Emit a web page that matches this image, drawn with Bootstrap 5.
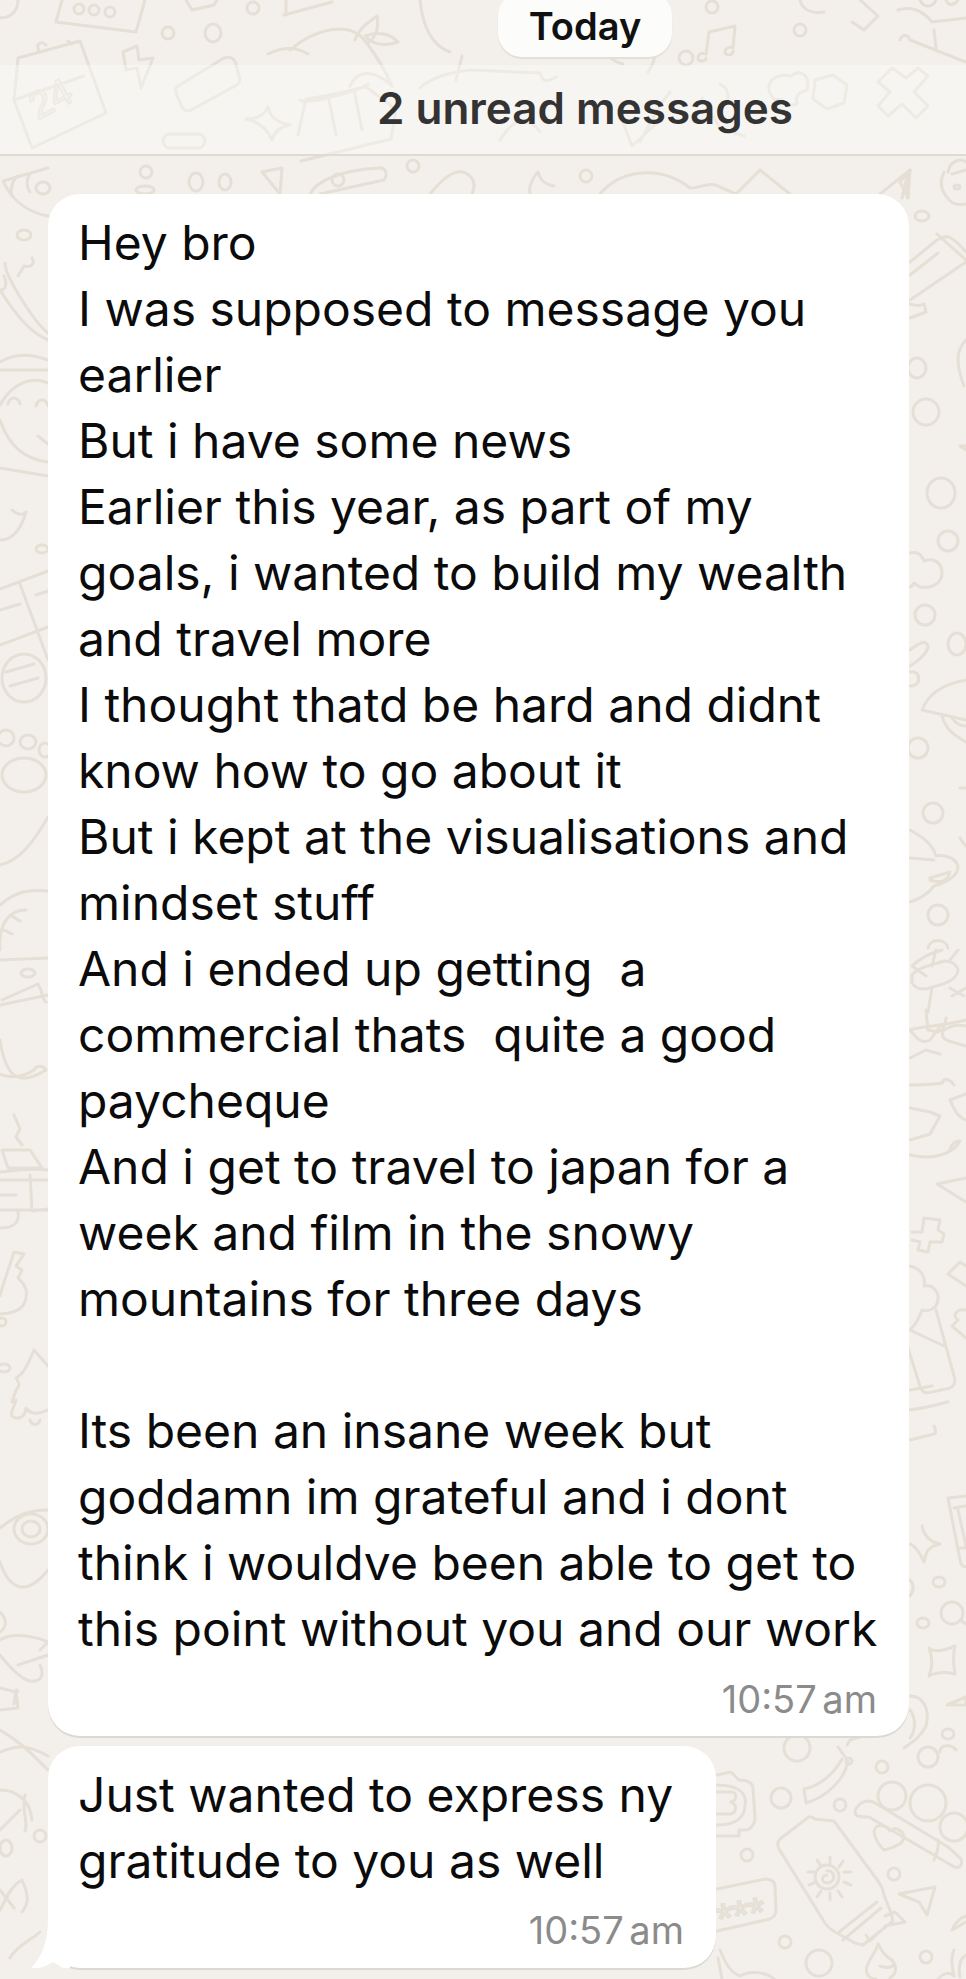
<!DOCTYPE html>
<html lang="en">
<head>
  <meta charset="UTF-8">
  <title>Chat</title>
  <meta name="viewport" content="width=device-width, initial-scale=1">
  <link href="https://cdn.jsdelivr.net/npm/bootstrap@5.3.0/dist/css/bootstrap.min.css" rel="stylesheet">
  <style>
    body { background-color: #f3f0eb; font-family: Inter, "Liberation Sans", sans-serif; overflow: hidden; }
    .chat-screen { height: 1979px; overflow: hidden; }
    .doodles { position: absolute; top: 0; left: 0; width: 966px; height: 1979px; fill: none; stroke: #e5dfd5; stroke-width: 3; stroke-linecap: round; stroke-linejoin: round; }
    .doodles text { font-family: "Liberation Sans", sans-serif; stroke-width: 2; }
    .day-pill {
      height: 65px; width: 174px; margin: -8px 0 0 498px; padding-top: 3px;
      background: #fcfcfb; border-radius: 24px;
      box-shadow: 0 2px 1px #e2dfd9;
      font-size: 38px; font-weight: 600; color: #111;
    }
    .unread-band {
      height: 91px; margin-top: 8px; padding: 0 0 4px 204px;
      background: rgba(255,255,255,.36);
      border-bottom: 2px solid #dedbd5;
      font-size: 44px; font-weight: 600; color: #333;
    }
    .bubble {
      background: #fff; border-radius: 32px; color: #0b0b0b;
      box-shadow: 0 2px 0 #dcd9d3;
      margin-left: 48px; padding: 16px 32px 0 30px;
      font-size: 48px; line-height: 66px; white-space: pre;
    }
    .bubble-long { width: 861px; height: 1542px; margin-top: 38px; }
    .bubble-short { width: 668px; height: 222px; margin-top: 10px; }
    .msg-time { font-size: 38px; line-height: 40px; color: #8b8b8b; word-spacing: -5px; margin-top: 17px; }
    .bubble-short .msg-time { margin-top: 16px; }
    .bubble-tail { position: absolute; left: -18px; bottom: -1px; width: 40px; height: 50px; fill: #fff; }
  </style>
</head>
<body>
  <div class="chat-screen position-relative">
    <!-- wallpaper -->
    <svg class="doodles" viewBox="0 0 966 1979">
      <!-- top -->
      <path d="M0 18c10 0 18-6 18-18"/>
      <path d="M62 0l-6 22 80 10 9-32"/>
      <circle cx="79" cy="9" r="5"/><circle cx="94" cy="10" r="5"/><circle cx="110" cy="12" r="5"/>
      <circle cx="168" cy="33" r="6"/><ellipse cx="213" cy="33" rx="8" ry="9"/><circle cx="253" cy="8" r="6"/>
      <path d="M186 0l6 10 22-5 3-5"/><path d="M284 15l48-13M286 0v15"/>
      <path d="M18 58l62-17 26 72-74 35-18-48z"/><path d="M40 52c-6-8 2-12 6-7M72 44l-4-3M14 100l70-24"/>
      <text x="30" y="112" font-size="38" transform="rotate(-28 50 100)">24</text>
      <path d="M123 52l14-6 2 14 14-2-12 30-4-20-11 2z"/>
      <path d="M178 86l46-28c6-2 10 0 12 6l3 12c2 4 0 8-4 10l-44 24c-6 2-8 0-10-5l-5-12c-1-4 0-6 2-7z"/>
      <rect x="163" y="134" width="42" height="14" rx="7"/>
      <path d="M246 119c12 0 18-4 22-12 2 10 8 15 22 18-12 2-16 8-18 15-4-10-12-18-26-21z"/>
      <path d="M268 54c16-8 30-6 40 0M290 50c26-22 60-30 76-8 12 16 20 30 26 44-4-4-30-26-42 0"/>
      <path d="M355 40c4-12 14-18 22-24 2 12 0 20-8 26M365 36c10-4 24-4 33 6-12 4-24 4-33-6"/>
      <path d="M298 135l8-36c18-2 40-8 60-12l30 22-5 30-90 22M300 100c6 6 60-10 68-16M328 95l8 40M354 90l8 40"/>
      <path d="M420 0c2 20 8 44 30 52M420 88c10-10 30-16 50-18l70 3c2 8 6 10 16 4M456 80l6-24"/>
      <path d="M500 140c16-26 30-22 40-8M605 50c4 6 8 12 18 14M640 0c12 26 24 50 8 72"/>
      <circle cx="686" cy="58" r="7"/>
      <path d="M706 54l3-22 26-6-2 22M706 54c-4-2-8 0-8 4s8 4 8 0M733 48c-3-2-8 0-8 4s8 4 8-1"/>
      <circle cx="712" cy="7" r="6"/><circle cx="800" cy="30" r="6"/>
      <path d="M775 100c-14-14-2-28 16-24 10-8 20 0 16 14-8 2-12 6-10 14l-10 2c-2-6-8-8-12-6z"/>
      <path d="M815 80l18-5 14 10-3 18-17 6-14-10z"/>
      <path d="M878 82l14-14 14 10 12-10 10 8-14 16 14 14-12 12-14-14-14 12-10-10 12-14z"/>
      <path d="M800 0c2 10 12 14 24 12M860 0l18 16-14 14-12-8M898 10c14-4 24 0 34 12l34-4M920 0c4 8 12 8 16 0M946 0c2 6 8 6 12 0"/>
      <path d="M900 40c2-6 8-6 10 0l56 22M934 30l2 18"/>
      <path d="M640 142c10-20 20-38 30-50M702 98l18 30 24 8M618 110l14 36 24-22M720 84c8 4 10 12 6 20"/>
      <!-- below the band -->
      <path d="M3 181c10 22 28 32 45 35M3 181l45-13"/><ellipse cx="43" cy="188" rx="7" ry="6"/>
      <path d="M18 176c-6 4-8 14-6 20M30 174c-4 6-4 12 0 18"/>
      <circle cx="146" cy="172" r="6"/><ellipse cx="196" cy="182" rx="7" ry="9"/><ellipse cx="225" cy="182" rx="6" ry="8"/><ellipse cx="145" cy="190" rx="9" ry="4"/>
      <path d="M262 172l18 22M262 172l20-4-2 26M310 194c6-12 28-24 70-26 6 0 8 6 4 12l-64 14"/><circle cx="338" cy="180" r="6"/>
      <circle cx="413" cy="166" r="6"/><path d="M430 194c16-20 30-28 40-18 6 6 4 12 2 18"/><circle cx="586" cy="176" r="6"/>
      <path d="M530 194c-2-8 4-18 8-22 2 8 6 12 16 14"/><path d="M600 194c20-24 60-30 90-6 12 0 20-8 32 0l14 6M736 194l24-24 30 24M880 194l30-24-4 24"/>
      <path d="M0 290c8 0 6-10 4-14M5 263c0 14 30 60 43 70M0 290c20 32 34 44 48 50M18 276l6-10c6 2 12-2 8-8M0 370h48M0 362c16-10 32-8 48-2"/>
      <ellipse cx="24" cy="235" rx="7" ry="5"/>
      <path d="M0 420c10 30 30 40 48 42M0 405c14-25 34-28 48-22"/><path d="M8 404c2-8 10-8 12 0M36 406c2-8 10-8 12 0M38 436l10 8M0 468l48 8"/>
      <path d="M0 540c14 0 22-14 26-28 -4 4-10 2-14-2"/>
      <ellipse cx="42" cy="549" rx="6" ry="4"/>
      <path d="M0 589l48-18M0 645l48-18M20 584l28 76M0 610l20-6M36 595l12-4"/>
      <ellipse cx="24" cy="678" rx="22" ry="24"/><path d="M6 672l28-8M10 686l28-8"/>
      <ellipse cx="6" cy="738" rx="8" ry="8"/><ellipse cx="28" cy="742" rx="8" ry="7"/><ellipse cx="45" cy="750" rx="6" ry="7"/><ellipse cx="24" cy="775" rx="22" ry="17"/>
      <path d="M0 865c20-4 34-24 48-48"/><path d="M0 905c16-14 30-16 48-14M0 950c-2-30 12-40 26-40M10 915l10 6M4 930l8 4"/>
      <path d="M0 1005l48-10M0 960l48-2M2 1000l36-16c6 10 4 16 8 18"/><ellipse cx="28" cy="973" rx="7" ry="4"/>
      <path d="M0 1040c6 40 20 46 46 30 -4-6-10-4-12 0-12 8-26 8-34 4"/>
      <path d="M14 1115l6 14-4 8 6 8M2 1150l6 18 34 0-12-18zM0 1180h48M0 1172c20-2 34-4 48-2M30 1175l2 36 16-2M0 1210h48M0 1195h16M0 1228c14 0 20-6 18-16"/>
      <path d="M14 1252c-4 14-10 28-14 44M14 1252l10 2 -8 12 6 4 -4 8c6 6 12 12 6 26-4 8-18 10-24 10"/><circle cx="2" cy="1322" r="4"/><ellipse cx="4" cy="1368" rx="6" ry="4"/>
      <path d="M34 1350l14 16M34 1350c-6 14-10 24-18 28 4 6 4 8 0 12l-4 12 4-2c-2 8-6 12-4 16 8 6 14-2 14-8 6 8 14 6 26 0M30 1420c2 6 8 6 10 0"/>
      <path d="M0 1528c18-14 30-18 48-18M0 1562c8 24 24 38 48 8"/><ellipse cx="31" cy="1529" rx="17" ry="15"/><ellipse cx="31" cy="1529" rx="9" ry="8"/>
      <path d="M0 1640c12-8 34-4 48 2M0 1655c8 10 24 28 34 26 8 0 10-8 6-16M18 1665l30-10M40 1650l8-8M0 1612c8 8 6 16 0 20"/>
      <path d="M0 1688l16 4 2 16-18 2M16 1692c4 0 0-4 0 0M16 1690l-2 14"/>
      <path d="M0 1730c20 12 28 20 48 40M0 1752c20-8 30-6 48 4M0 1790c14 0 30 8 32 30M20 1810l-20 20"/>
      <path d="M25 1795c-4 18 4 26 0 36"/>
      <circle cx="40" cy="1836" r="6"/><ellipse cx="6" cy="1848" rx="6" ry="8"/><path d="M0 1910c10-20 14-26 22-30 8 18 6 24 0 32M0 1890l14 18M10 1958c6-12 24-20 30-26"/>
      <!-- right margin -->
      <path d="M908 172l-6 26"/><path d="M910 170l-10 12 8 16z"/>
      <path d="M944 172c-4 8-4 16 2 24 4 6 8 10 20 8M948 172c2-12 14-14 18-10M952 174l14-4"/><ellipse cx="957" cy="187" rx="3" ry="2"/>
      <ellipse cx="922" cy="216" rx="7" ry="5"/>
      <path d="M910 262l27-22c6-4 10-4 14-2 6 4 10 8 15 14M937 234l29 26M910 275l28-22M910 300l56-38M910 304c6 2 10 2 14 0l2 8-16 6"/>
      <path d="M966 340c-8 8-12 20-2 46"/>
      <ellipse cx="917" cy="368" rx="9" ry="10"/><ellipse cx="926" cy="412" rx="13" ry="13"/>
      <path d="M960 446l6 4M960 446h6"/>
      <ellipse cx="941" cy="493" rx="14" ry="15"/><ellipse cx="948" cy="541" rx="10" ry="10"/>
      <path d="M910 553c8-2 12 2 14 8 10-4 18 2 18 12 0 10-10 16-22 14l-6-4c-2 4-4 4-4 4"/>
      <ellipse cx="925" cy="615" rx="10" ry="10"/><ellipse cx="957" cy="644" rx="9" ry="11"/>
      <path d="M910 650c10-8 16-10 18-4 0 6-8 14-18 20M910 672c8-2 10 6 8 10-2 4-6 4-8 4"/>
      <path d="M922 710c6-16 22-26 44-30M922 710l44 10M942 716c2 8 6 16 24 26M952 718c4 6 8 8 14 8"/>
      <ellipse cx="918" cy="748" rx="10" ry="10"/>
      <path d="M960 788h6"/><ellipse cx="933" cy="813" rx="10" ry="10"/>
      <path d="M960 838c2 4 4 6 6 8M910 830c10 6 22 12 26 26 8-2 20 2 22 10 0 10-10 16-24 20-6 8-16 14-24 16M930 878l20-6c-2 8-8 12-20 8M910 858l24 2"/>
      <ellipse cx="938" cy="915" rx="10" ry="10"/><path d="M928 948c2-10 18-10 20 0"/>
      <path d="M912 966c6-6 16-12 30-16M936 950l-4 16M958 950l-8 10M912 975c6-8 20-10 32-14 10 0 14 6 14 10-2 10-16 14-26 16-8 4-16 2-20-4zM932 988l-4 24M912 966l14 10M950 988l14 8M926 1010l2 20 10 2c6-2 8-10 8-14M966 988l-14 8"/>
      <path d="M910 1030c10-4 34-4 56-10M910 1030c8 10 12 14 20 10l10-14M966 1026c-8-2-16 0-22 4-4 6 0 10 8 12l14 4M910 1058l16-8 14 4M910 1085c10 0 20 0 32-2 2-6 8-4 12 2"/>
      <path d="M910 1108l20 4 10 4-10 18-20 6M966 1094l-16 6c4 8 6 16 16 20M910 1155c24 6 44-2 50-14-4 0-8 2-10 8"/>
      <path d="M937 1184l29-6M937 1184l29 18"/>
      <path d="M912 1232h10l2-14 16 2-2 10 6 4-2 8-12 0-2 10-10-2 2-8-8-2"/>
      <path d="M948 1274l12-12 6 4M948 1274l18 12"/>
      <path d="M966 1310c-10-2-14 6-8 10l-6 6 14 12"/>
      <path d="M910 1266c10 2 16 10 14 20 10-2 18 8 12 20-4 4-8 6-14 4-4 10-6 14-12 20l34 16M936 1310l18 66c2 6 0 10-4 12l-18 4c-8 2-10 0-12-6l-12-38c-4-8-6-8-12-12M910 1390l22-4M908 1410c20-2 30-6 40-8M910 1440l24-6c2 0 2-4 0-8"/>
      <path d="M948 1498l18-2M948 1498l12 62c0 4 4 8 6 6M954 1508l12-2M958 1510l8 36 0 2-6 0"/>
      <path d="M922 1526c2 10 8 16 18 18-10 2-14 6-16 18-4-8-8-16-14-18"/>
      <path d="M910 1580c4 4 4 10 0 16"/>
      <ellipse cx="939" cy="1582" rx="6" ry="5"/><ellipse cx="923" cy="1623" rx="6" ry="5"/><circle cx="952" cy="1613" r="11"/><path d="M960 1620l6 4"/>
      <path d="M929 1648c4 4 12 4 26-2-2 8-2 16 0 28-8-2-18-2-26 2 4-10 4-18 0-28z"/>
      <path d="M910 1696c14 0 20 14 16 30-6 12-14 16-22 22M910 1710c6 8 6 20 0 28"/><path d="M947 1705l19-8v8z"/><ellipse cx="948" cy="1734" rx="6" ry="5"/>
      <path d="M940 1752c0-8 12-8 16-2"/>
      <!-- bottom right -->
      <circle cx="797" cy="1748" r="13"/><circle cx="882" cy="1767" r="6"/><circle cx="928" cy="1757" r="10"/>
      <path d="M847 1745l3 -5 10-3M848 1761l-10-14M848 1761c-4 20-22 36-42 42l-2-14c12-2 28-12 38-30"/><circle cx="849" cy="1761" r="3"/>
      <circle cx="892" cy="1796" r="14"/><circle cx="928" cy="1803" r="18"/><circle cx="954" cy="1827" r="14"/>
      <path d="M855 1811c4-10 14-12 20-8l70 42c6 4 10 8 16 14 2 6-2 12-10 6l-82-48c-10 0-14 0-14-6zM938 1840c2 8-2 14-4 20"/>
      <path d="M884 1850c-4-4-8-10-9-14-3-8 3-12 8-10 3 0 6 3 7 5 2-3 6-3 9-1 5 2 6 8 3 12-4 4-10 6-18 8z"/>
      <circle cx="781" cy="1798" r="10"/><circle cx="840" cy="1805" r="6"/><circle cx="747" cy="1855" r="6"/><circle cx="894" cy="1874" r="6"/>
      <path d="M717 1775l14-3 8 8c10 0 14 4 14 8l2 30c0 6-4 12-10 12l-6 0 0 6-22 0M717 1792h16c4 2 4 8-2 10 6 2 6 10 0 12h-14M717 1785c24 0 30 10 28 20 0 10-6 20-28 20"/>
      <path d="M815 1819c-4-3-6-3-9 0l-26 20c-3 3-3 6-1 10l46 74c4 6 8 8 12 10l18 10 8 2 30-24-2-8-7-18c-1-6-3-10-6-14l-44-60z"/>
      <path d="M839 1932l38-30M843 1940l38-32M866 1935l4 6 6-6M885 1916l10-4 10 10 -20 4"/>
      <circle cx="827" cy="1877" r="12"/><path d="M827 1871c8-2 10 12 0 12-6 0-6-8 0-8"/>
      <path d="M830 1857v8M843 1861l-4 6M851 1872h-7M851 1885l-7-3M842 1897l-4-6M830 1900v-7M817 1897l4-6M809 1885l7-3M808 1872h7M817 1860l4 6"/>
      <path d="M717 1889l48-10c6 0 10 2 10 8l1 22c0 6-2 8-6 10l-53 12"/>
      <text x="716" y="1928" font-size="42" transform="rotate(-10 750 1910)">***</text>
      <path d="M899 1894l36-7-8 28-8-13z"/>
      <circle cx="785" cy="1942" r="6"/><circle cx="819" cy="1963" r="13"/><circle cx="926" cy="1957" r="6"/>
      <path d="M878 1944c4 8 10 14 14 16 6 8 4 14-2 18M878 1944c-2 8-8 14-10 20-4 8 0 15 8 15M880 1966c6 2 12 2 14-2"/>
      <path d="M720 1950c6 14 10 22 20 26 10-6 26-4 34 3M718 1958l4 21M954 1950c-4 8-2 18 0 26-4-4-10-4-16 3M966 1955c-6 4-8 12-6 22M966 1916c-6 2-12 8-14 14l14-8"/>
    </svg>

    <div class="position-relative">
      <div class="day-pill d-flex align-items-center justify-content-center">Today</div>
      <div class="unread-band d-flex align-items-center justify-content-center">2 unread messages</div>

      <div class="bubble bubble-long">Hey bro
I was supposed to message you
earlier
But i have some news
Earlier this year, as part of my
goals, i wanted to build my wealth
and travel more
I thought thatd be hard and didnt
know how to go about it
But i kept at the visualisations and
mindset stuff
And i ended up getting  a
commercial thats  quite a good
paycheque
And i get to travel to japan for a
week and film in the snowy
mountains for three days

Its been an insane week but
goddamn im grateful and i dont
think i wouldve been able to get to
this point without you and our work
<div class="msg-time text-end">10:57 am</div></div>

      <div class="bubble bubble-short position-relative">Just wanted to express ny
gratitude to you as well
<div class="msg-time text-end">10:57 am</div><svg class="bubble-tail" viewBox="0 0 40 50"><path d="M18 0C18 22 12 38 1 49c8 1 16-2 22-6l10 6h7V0z"/></svg></div>
    </div>
  </div>

  <script src="https://cdn.jsdelivr.net/npm/bootstrap@5.3.0/dist/js/bootstrap.bundle.min.js"></script>
</body>
</html>
